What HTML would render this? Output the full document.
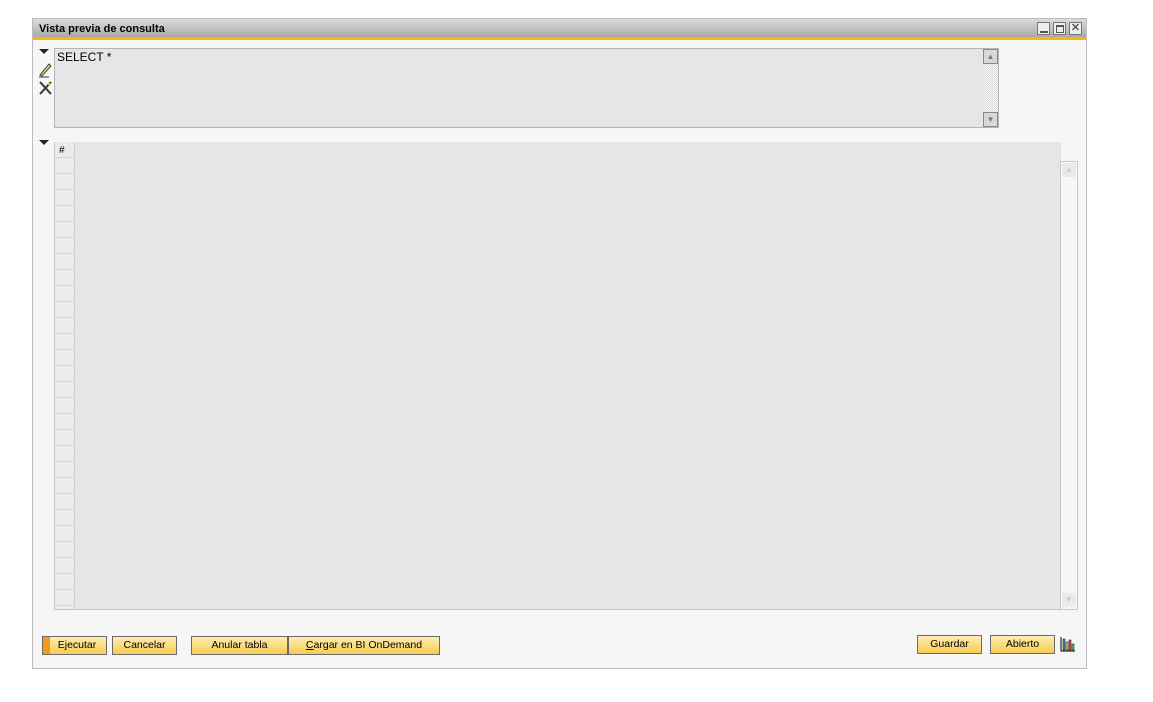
<!DOCTYPE html><html><head><style>
body{margin:0;width:1153px;height:702px;background:#fff;position:relative;font-family:"Liberation Sans",sans-serif;font-size:11px;overflow:hidden}
.a{position:absolute;box-sizing:border-box}
.btn{position:absolute;box-sizing:border-box;height:19px;border:1px solid #6b6b6b;background:linear-gradient(#fdeeb5,#fbd876 60%,#f8cc55);text-align:center;line-height:17px;font-size:10.5px;color:#000}
</style></head><body>
<div class="a" style="left:32px;top:18px;width:1055px;height:651px;border:1px solid #bcbcbc;background:#f6f6f6"></div>
<div class="a" style="left:33px;top:19px;width:1053px;height:18px;background:linear-gradient(#dcdcdc,#a9a9a9)"></div>
<div class="a" style="left:39px;top:23px;font-weight:bold;font-size:11px">Vista previa de consulta</div>
<div class="a" style="left:33px;top:37px;width:1053px;height:3px;background:#f6b80f"></div>
<div class="a" style="left:1037px;top:22px;width:13px;height:13px;border:1px solid #777;background:#eee"><div class="a" style="left:2px;top:8px;width:8px;height:2px;background:#555"></div></div>
<div class="a" style="left:1053px;top:22px;width:13px;height:13px;border:1px solid #777;background:#eee"><div class="a" style="left:2px;top:2px;width:8px;height:8px;border:1px solid #555;border-top-width:2px"></div></div>
<div class="a" style="left:1069px;top:22px;width:13px;height:13px;border:1px solid #777;background:#eee;font-size:11px;line-height:11px;text-align:center;color:#555;font-weight:bold">✕</div>
<div class="a" style="left:39px;top:49px;width:0;height:0;border-left:5px solid transparent;border-right:5px solid transparent;border-top:5px solid #223"></div>
<div class="a" style="left:39px;top:140px;width:0;height:0;border-left:5px solid transparent;border-right:5px solid transparent;border-top:5px solid #223"></div>
<svg class="a" style="left:37px;top:61px" width="16" height="40"><path d="M3 14 L12 3 L14 5 L5 15 Z" fill="#f4d85a" stroke="#444"/><path d="M2 16h10" stroke="#333"/><path d="M3 21 L14 33 M14 21 L3 33" stroke="#333" stroke-width="2"/><path d="M11 22l2 2" stroke="#e6c84a" stroke-width="2"/></svg>
<div class="a" style="left:54px;top:48px;width:945px;height:80px;border:1px solid #b5b5b5;background:#e6e6e6"></div>
<div class="a" style="left:57px;top:50px;font-size:12px">SELECT *</div>
<div class="a" style="left:982px;top:49px;width:16px;height:78px;background:repeating-conic-gradient(#ddd 0 25%,#f4f4f4 0 50%) 0 0/2px 2px"></div>
<div class="a" style="left:983px;top:49px;width:15px;height:15px;border:1px solid #888;background:#d8d8d4;color:#777;font-size:8px;text-align:center;line-height:13px">▲</div>
<div class="a" style="left:983px;top:112px;width:15px;height:15px;border:1px solid #888;background:#d8d8d4;color:#777;font-size:8px;text-align:center;line-height:13px">▼</div>
<div class="a" style="left:54px;top:142px;width:1007px;height:468px;border-left:1px solid #c8c8c8;border-bottom:1px solid #c8c8c8;background:#e6e6e6"></div>
<div class="a" style="left:55px;top:142px;width:20px;height:467px;border-right:1px solid #d0d0d0;background:repeating-linear-gradient(#ecebec 0 15px,#d6d6d6 15px 16px);background-position:0 0"></div>
<div class="a" style="left:59px;top:145px;font-size:10px">#</div>
<div class="a" style="left:1060px;top:161px;width:18px;height:449px;border:1px solid #c8c8c8;background:#f6f6f6"></div>
<div class="a" style="left:1062px;top:163px;width:14px;height:14px;background:#ebe9ea;color:#ccc;font-size:8px;text-align:center;line-height:14px">▲</div>
<div class="a" style="left:1062px;top:593px;width:14px;height:14px;background:#ebe9ea;color:#ccc;font-size:8px;text-align:center;line-height:14px">▼</div>
<div class="btn" style="left:42px;top:636px;width:65px;border-left:none"><div class="a" style="left:0;top:0;width:8px;height:17px;background:#f49a1a;border-left:1px solid #6b6b6b"></div><span style="position:relative;left:3px">Ejecutar</span></div>
<div class="btn" style="left:112px;top:636px;width:65px">Cancelar</div>
<div class="btn" style="left:191px;top:636px;width:97px">Anular tabla</div>
<div class="btn" style="left:288px;top:636px;width:152px"><u>C</u>argar en BI OnDemand</div>
<div class="btn" style="left:917px;top:635px;width:65px">Guardar</div>
<div class="btn" style="left:990px;top:635px;width:65px">Abierto</div>
<svg class="a" style="left:1060px;top:636px" width="16" height="16"><path d="M1 1v14h14" stroke="#000" fill="none"/><rect x="3" y="3" width="2" height="11" fill="#4a8fd6" stroke="#000" stroke-width=".5"/><rect x="6" y="6" width="2" height="8" fill="#f0e040" stroke="#000" stroke-width=".5"/><rect x="9" y="4" width="2" height="10" fill="#e05070" stroke="#000" stroke-width=".5"/><rect x="12" y="8" width="2" height="6" fill="#6c6" stroke="#000" stroke-width=".5"/></svg>
</body></html>
